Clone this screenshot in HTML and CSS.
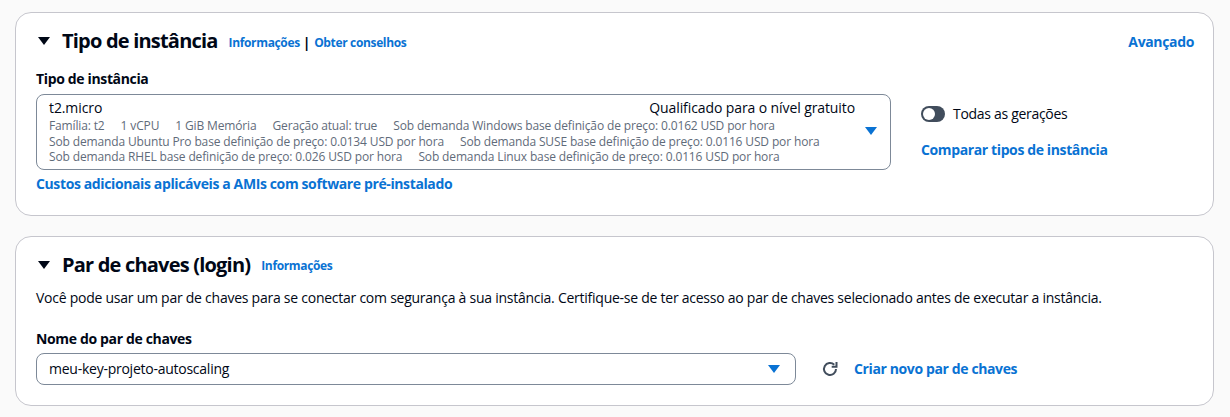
FILE: index.html
```html
<!DOCTYPE html>
<html lang="pt-BR">
<head>
<meta charset="utf-8">
<link rel="stylesheet" href="styles.css">
</head>
<body>
<div class="page">
  <section class="card first">
    <div class="card-head">
      <div class="head-left">
        <svg class="expand" width="12" height="8" viewBox="0 0 12 8"><path d="M0 0h12L6 8z" fill="#000716"/></svg>
        <h2 class="title">Tipo de instância</h2>
        <span class="info"><a class="link">Informações</a><span class="sep">|</span><a class="link">Obter conselhos</a></span>
      </div>
      <a class="link adv">Avançado</a>
    </div>
    <div class="label">Tipo de instância</div>
    <div class="type-row">
      <div class="select big">
        <div class="sel-main">
          <div class="sel-top"><span>t2.micro</span><span>Qualificado para o nível gratuito</span></div>
          <div class="tags">
            <span>Família: t2</span><span>1 vCPU</span><span>1 GiB Memória</span><span>Geração atual: true</span><span>Sob demanda Windows base definição de preço: 0.0162 USD por hora</span>
          </div>
          <div class="tags">
            <span>Sob demanda Ubuntu Pro base definição de preço: 0.0134 USD por hora</span><span>Sob demanda SUSE base definição de preço: 0.0116 USD por hora</span>
          </div>
          <div class="tags">
            <span>Sob demanda RHEL base definição de preço: 0.026 USD por hora</span><span>Sob demanda Linux base definição de preço: 0.0116 USD por hora</span>
          </div>
        </div>
        <svg class="caret" width="12" height="8" viewBox="0 0 12 8"><path d="M0 0h12L6 8z" fill="#0972d3"/></svg>
      </div>
      <div class="side">
        <div class="toggle-row"><span class="toggle"><span class="knob"></span></span><span>Todas as gerações</span></div>
        <a class="link strong">Comparar tipos de instância</a>
      </div>
    </div>
    <a class="link strong extra">Custos adicionais aplicáveis a AMIs com software pré-instalado</a>
  </section>

  <section class="card second">
    <div class="card-head">
      <div class="head-left">
        <svg class="expand" width="12" height="8" viewBox="0 0 12 8"><path d="M0 0h12L6 8z" fill="#000716"/></svg>
        <h2 class="title">Par de chaves (login)</h2>
        <span class="info"><a class="link">Informações</a></span>
      </div>
    </div>
    <p class="desc">Você pode usar um par de chaves para se conectar com segurança à sua instância. Certifique-se de ter acesso ao par de chaves selecionado antes de executar a instância.</p>
    <div class="label">Nome do par de chaves</div>
    <div class="key-row">
      <div class="select small">
        <span>meu-key-projeto-autoscaling</span>
        <svg class="caret" width="12" height="8" viewBox="0 0 12 8"><path d="M0 0h12L6 8z" fill="#0972d3"/></svg>
      </div>
      <svg class="refresh" width="16" height="16" viewBox="0 0 16 16"><path d="M14 8a6 6 0 1 1-1.76-4.24" fill="none" stroke="#414d5c" stroke-width="2"/><path d="M14.5 1v4.8H9.7" fill="none" stroke="#414d5c" stroke-width="2" stroke-linejoin="miter"/></svg>
      <a class="link strong">Criar novo par de chaves</a>
    </div>
  </section>
</div>
</body>
</html>
```
FILE: styles.css
```css
* { box-sizing: border-box; }
html, body { margin: 0; padding: 0; }
body {
  background: #fafafa;
  font-family: "Open Sans", "Helvetica Neue", Roboto, Arial, sans-serif;
  color: #000716;
  font-size: 14px;
  line-height: 20px;
  letter-spacing: -0.25px;
}
.page {
  padding: 12px 16px 0 15px;
  display: flex;
  flex-direction: column;
  gap: 20px;
}
.card {
  background: #fff;
  border: 1px solid #c6c6cd;
  border-radius: 16px;
  padding: 15px 20px 21px 20px;
}
.card.second { padding-bottom: 20px; }
.card-head {
  display: flex;
  align-items: center;
  justify-content: space-between;
  height: 26px;
}
.head-left { display: flex; align-items: center; }
.expand { margin: 0 12px 0 2px; }
.title {
  margin: 0;
  font-size: 20px;
  line-height: 26px;
  font-weight: 700;
  letter-spacing: -0.8px;
}
.info {
  margin-left: 11px;
  font-size: 12px;
  font-weight: 700;
  padding-top: 3px;
  display: flex;
  align-items: center;
  letter-spacing: -0.35px;
}
.sep { margin: 0 4px 0 3px; color: #000716; font-weight: 700; font-size: 14px; }
.link { color: #0972d3; font-weight: 700; text-decoration: none; }
.adv { font-size: 14px; margin-right: -1px; margin-top: 2px; letter-spacing: -0.35px; }
.label {
  font-weight: 700;
  font-size: 14px;
  line-height: 22px;
  margin-top: 14px;
  margin-bottom: 4px;
  letter-spacing: -0.35px;
}
.type-row { display: flex; align-items: flex-start; }
.select {
  border: 1px solid #7d8998;
  border-radius: 8px;
  display: flex;
  align-items: center;
  background: #fff;
}
.select.big {
  width: 855px;
  padding: 3px 13px 4px 12px;
  flex: none;
}
.sel-main { flex: 1; }
.sel-top { display: flex; justify-content: space-between; padding-right: 2px; letter-spacing: -0.1px; }
.tags {
  font-size: 12px;
  line-height: 15.5px;
  color: #5f6b7a;
  display: flex;
  gap: 16px;
  letter-spacing: -0.14px;
}
.caret { flex: none; margin-left: 8px; }
.side {
  margin-left: 30px;
  padding-top: 10px;
  display: flex;
  flex-direction: column;
  gap: 16px;
}
.toggle-row { display: flex; align-items: center; gap: 8px; letter-spacing: -0.3px; }
.toggle {
  width: 24px; height: 16px;
  border-radius: 8px;
  background: #414d5c;
  position: relative;
  display: inline-block;
}
.knob {
  position: absolute;
  left: 2px; top: 2px;
  width: 12px; height: 12px;
  border-radius: 50%;
  background: #fff;
}
.strong { font-size: 14px; letter-spacing: -0.38px; }
.extra { display: block; margin-top: 4px; }
.desc { margin: 10px 0 0 0; }
.second .label { margin-top: 20px; margin-bottom: 3px; }
.key-row { display: flex; align-items: center; }
.select.small {
  width: 760px;
  height: 32px;
  padding: 0 15px 0 12px;
  justify-content: space-between;
}
.refresh { margin-left: 26px; margin-right: 16px; }
```
